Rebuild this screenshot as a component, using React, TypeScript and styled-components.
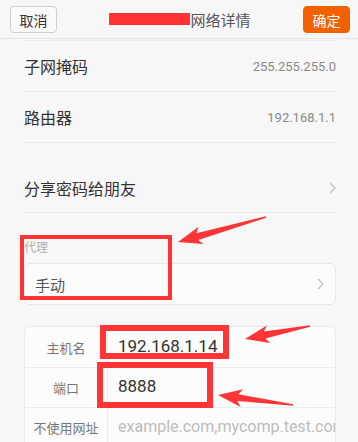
import React from 'react';
import styled, { createGlobalStyle } from 'styled-components';

const GlobalStyle = createGlobalStyle`
  html, body {
    margin: 0;
    padding: 0;
    background: #f7f7f7;
  }
  * {
    box-sizing: border-box;
  }
`;

const Screen = styled.div`
  position: relative;
  width: 358px;
  height: 442px;
  overflow: hidden;
  background: #f7f7f7;
  font-family: Roboto, "Noto Sans CJK SC", sans-serif;
  color: #333;
`;

const Header = styled.div`
  height: 39px;
  display: flex;
  align-items: center;
  justify-content: space-between;
  padding: 0 8px 0 10px;
  border-bottom: 1px solid #e4e4e4;
`;

const HeaderButton = styled.button<{ $primary?: boolean }>`
  width: 47px;
  height: 27px;
  margin-top: 1px;
  border-radius: 4px;
  font-family: inherit;
  font-size: 14px;
  padding: 0;
  cursor: pointer;
  border: 1px solid ${(p) => (p.$primary ? '#f26100' : '#cfcfcf')};
  background: ${(p) => (p.$primary ? '#f26100' : '#fafafa')};
  color: ${(p) => (p.$primary ? '#fff' : '#333')};
`;

const Title = styled.div`
  display: flex;
  align-items: center;
  font-size: 15px;
  color: #555;
`;

const Redacted = styled.span`
  width: 81px;
  height: 12px;
  background: #ff3333;
`;

const Content = styled.div`
  padding: 0 22px 0 24px;
`;

const List = styled.div`
  border-top: 1px solid #ececec;
  margin-top: 1px;
`;

const Row = styled.div<{ $tall?: boolean }>`
  display: flex;
  align-items: center;
  justify-content: space-between;
  height: ${(p) => (p.$tall ? '70px' : '51px')};
  padding-top: ${(p) => (p.$tall ? '20px' : '0')};
  border-bottom: 1px solid #e8e8e8;
`;

const RowLabel = styled.span`
  font-size: 16px;
  color: #333;
`;

const RowValue = styled.span`
  font-size: 13px;
  color: #8a8a8a;
`;

const SectionLabel = styled.div`
  margin-top: 27px;
  font-size: 12px;
  line-height: 16px;
  color: #b0b0b0;
`;

const Card = styled.div<{ $gap: number }>`
  margin-top: ${(p) => p.$gap}px;
  background: #fcfcfc;
  border: 1px solid #e9e9e9;
  border-radius: 6px;
  overflow: hidden;
`;

const SelectRow = styled.div`
  height: 40px;
  display: flex;
  align-items: center;
  justify-content: space-between;
  padding: 0 11px 0 10px;
  font-size: 15px;
  color: #555;
`;

const FieldRow = styled.div`
  height: 40px;
  display: grid;
  grid-template-columns: 83px 1fr;
  & + & {
    border-top: 1px solid #ececec;
  }
`;

const FieldLabel = styled.div`
  display: flex;
  align-items: center;
  justify-content: center;
  font-size: 13px;
  color: #777;
  border-right: 1px solid #ececec;
`;

const FieldValue = styled.div<{ $placeholder?: boolean }>`
  display: flex;
  align-items: center;
  padding-left: 10px;
  padding-bottom: 3px;
  font-size: ${(p) => (p.$placeholder ? '16px' : '17px')};
  color: ${(p) => (p.$placeholder ? '#bdbdbd' : '#333')};
  white-space: nowrap;
  overflow: hidden;
`;

const Mark = styled.div<{ $x: number; $y: number; $w: number; $h: number; $t: number }>`
  position: absolute;
  left: ${(p) => p.$x}px;
  top: ${(p) => p.$y}px;
  width: ${(p) => p.$w}px;
  height: ${(p) => p.$h}px;
  border: ${(p) => p.$t}px solid #ff3535;
  pointer-events: none;
`;

const Overlay = styled.svg`
  position: absolute;
  left: 0;
  top: 0;
  pointer-events: none;
`;

const Chevron = ({ size = 12 }: { size?: number }) => (
  <svg width={7} height={size} viewBox="0 0 7 12" fill="none">
    <path d="M1 1 L6 6 L1 11" stroke="#bdbdbd" strokeWidth="1.2" />
  </svg>
);

function arrowPoints(tx: number, ty: number, hx: number, hy: number) {
  const dx = hx - tx;
  const dy = hy - ty;
  const len = Math.hypot(dx, dy);
  const ux = dx / len;
  const uy = dy / len;
  const nx = -uy;
  const ny = ux;
  const headLen = 20;
  const neck = len - headLen;
  const barbBack = len - headLen - 4;
  const p = (along: number, side: number) =>
    `${(tx + ux * along + nx * side).toFixed(1)},${(ty + uy * along + ny * side).toFixed(1)}`;
  return [
    p(0, 0.8),
    p(neck, 3.5),
    p(barbBack, 9),
    p(len, 0),
    p(barbBack, -9),
    p(neck, -3.5),
    p(0, -0.8),
  ].join(' ');
}

const arrows = [
  { tx: 266, ty: 217, hx: 178, hy: 242 },
  { tx: 310, ty: 326, hx: 245, hy: 339 },
  { tx: 293, ty: 405, hx: 218, hy: 395 },
];

const proxyFields = [
  { label: '主机名', value: '192.168.1.14' },
  { label: '端口', value: '8888' },
  { label: '不使用网址', value: 'example.com,mycomp.test.com', placeholder: true },
];

export default function App() {
  return (
    <Screen>
      <GlobalStyle />
      <Header>
        <HeaderButton>取消</HeaderButton>
        <Title>
          <Redacted />
          网络详情
        </Title>
        <HeaderButton $primary>确定</HeaderButton>
      </Header>

      <Content>
        <List>
          <Row>
            <RowLabel>子网掩码</RowLabel>
            <RowValue>255.255.255.0</RowValue>
          </Row>
          <Row>
            <RowLabel>路由器</RowLabel>
            <RowValue>192.168.1.1</RowValue>
          </Row>
          <Row $tall>
            <RowLabel>分享密码给朋友</RowLabel>
            <Chevron />
          </Row>
        </List>

        <SectionLabel>代理</SectionLabel>
        <Card $gap={7}>
          <SelectRow>
            手动
            <Chevron size={14} />
          </SelectRow>
        </Card>

        <Card $gap={21}>
          {proxyFields.map((f) => (
            <FieldRow key={f.label}>
              <FieldLabel>{f.label}</FieldLabel>
              <FieldValue $placeholder={f.placeholder}>{f.value}</FieldValue>
            </FieldRow>
          ))}
        </Card>
      </Content>

      <Mark $x={100} $y={325} $w={129} $h={34} $t={6} />
      <Mark $x={97} $y={362} $w={116} $h={46} $t={6} />
      <Mark $x={20} $y={235} $w={152} $h={65} $t={4} />

      <Overlay width={358} height={442}>
        {arrows.map((a, i) => (
          <polygon key={i} points={arrowPoints(a.tx, a.ty, a.hx, a.hy)} fill="#ff3535" />
        ))}
      </Overlay>
    </Screen>
  );
}
